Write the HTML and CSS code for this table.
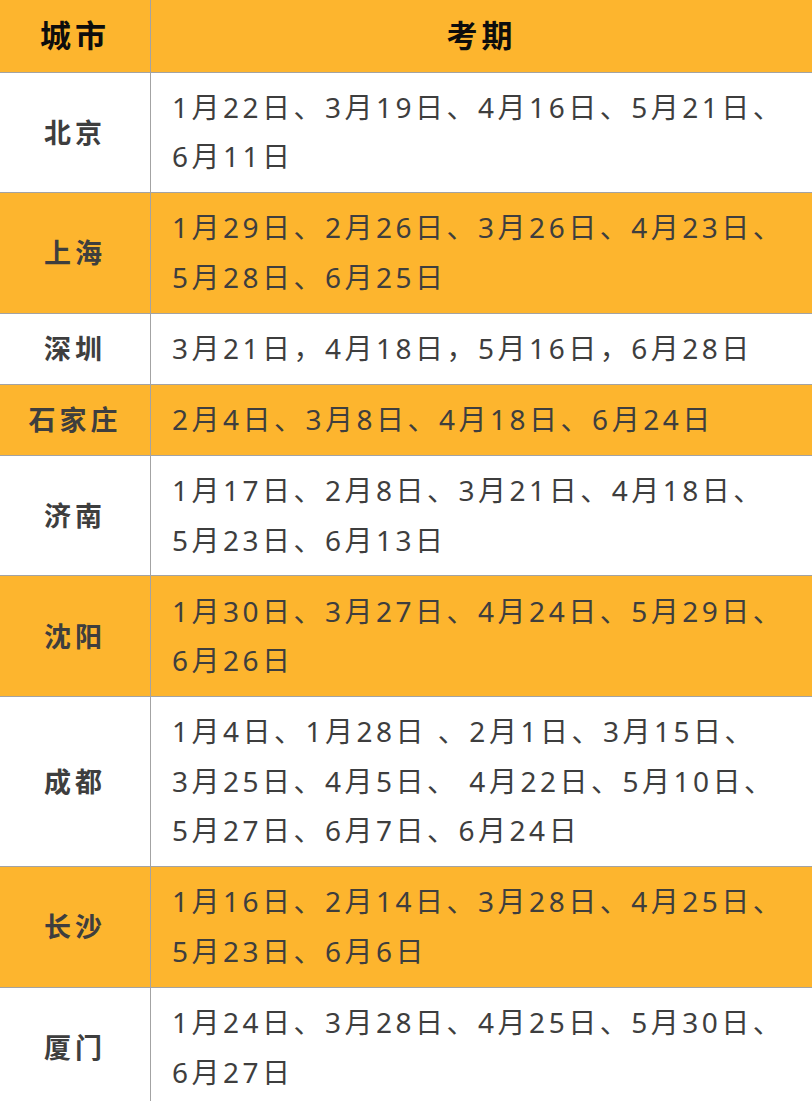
FILE: index.html
```html
<!DOCTYPE html>
<html lang="zh-CN">
<head>
<meta charset="utf-8">
<title>考期</title>
<link rel="stylesheet" href="styles.css">
</head>
<body>
<table class="exam">
  <thead>
    <tr class="hl">
      <th class="city">城市</th>
      <th class="dates">考期</th>
    </tr>
  </thead>
  <tbody>
    <tr>
      <td class="city">北京</td>
      <td class="dates">1月22日、3月19日、4月16日、5月21日、<br>6月11日</td>
    </tr>
    <tr class="hl">
      <td class="city">上海</td>
      <td class="dates">1月29日、2月26日、3月26日、4月23日、<br>5月28日、6月25日</td>
    </tr>
    <tr>
      <td class="city">深圳</td>
      <td class="dates">3月21日，4月18日，5月16日，6月28日</td>
    </tr>
    <tr class="hl">
      <td class="city">石家庄</td>
      <td class="dates">2月4日、3月8日、4月18日、6月24日</td>
    </tr>
    <tr>
      <td class="city">济南</td>
      <td class="dates">1月17日、2月8日、3月21日、4月18日、<br>5月23日、6月13日</td>
    </tr>
    <tr class="hl">
      <td class="city">沈阳</td>
      <td class="dates">1月30日、3月27日、4月24日、5月29日、<br>6月26日</td>
    </tr>
    <tr>
      <td class="city">成都</td>
      <td class="dates">1月4日、1月28日 、2月1日、3月15日、<br>3月25日、4月5日、 4月22日、5月10日、<br>5月27日、6月7日、6月24日</td>
    </tr>
    <tr class="hl">
      <td class="city">长沙</td>
      <td class="dates">1月16日、2月14日、3月28日、4月25日、<br>5月23日、6月6日</td>
    </tr>
    <tr>
      <td class="city">厦门</td>
      <td class="dates">1月24日、3月28日、4月25日、5月30日、<br>6月27日</td>
    </tr>
  </tbody>
</table>
</body>
</html>
```

FILE: styles.css
```css
html, body {
  margin: 0;
  padding: 0;
  background: #ffffff;
}

body {
  font-family: "Noto Sans", "Noto Sans CJK SC", sans-serif;
  color: #3e3e3e;
}

.exam {
  border-collapse: collapse;
  width: 812px;
  table-layout: fixed;
}

.exam th,
.exam td {
  border: 1px solid #a3a3a3;
  padding: 10.3px 0;
  line-height: 49.5px;
  vertical-align: middle;
  white-space: nowrap;
}

.exam tr > :first-child {
  border-left: none;
}

.exam tr > :last-child {
  border-right: none;
}

.exam thead tr > * {
  border-top: none;
  padding: 11px 0;
}

.hl {
  background: #fdb52e;
}

.city {
  width: 150px;
  text-align: center;
  font-weight: 700;
  font-size: 27px;
  letter-spacing: 4px;
}

th.city,
th.dates {
  color: #0d0d0d;
  font-size: 31px;
  letter-spacing: 4px;
  font-weight: 700;
}

th.dates {
  text-align: center;
  padding-left: 4px;
}

td.dates {
  text-align: left;
  padding-left: 21px;
  font-size: 28px;
  letter-spacing: 3.5px;
  overflow: hidden;
}
```
